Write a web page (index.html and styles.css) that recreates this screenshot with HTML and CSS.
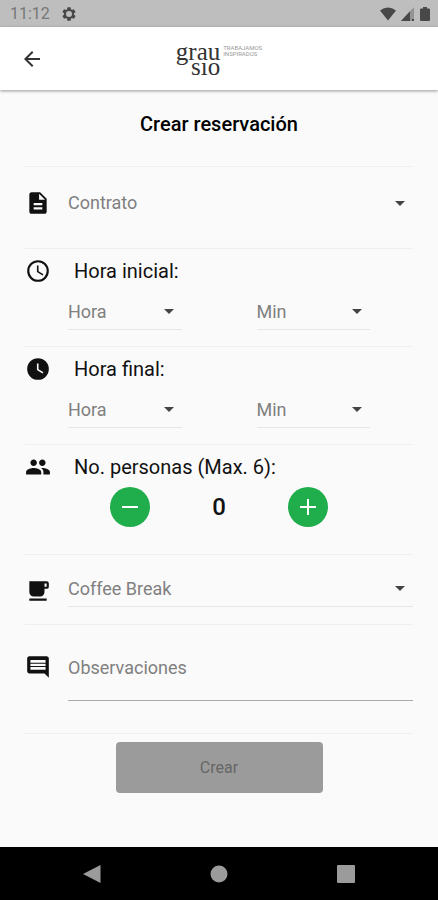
FILE: index.html
```html
<!DOCTYPE html>
<html lang="es">
<head>
<meta charset="utf-8">
<meta name="viewport" content="width=device-width, initial-scale=1">
<title>Crear reservación</title>
<link rel="stylesheet" href="styles.css">
</head>
<body>
<div class="status">
  <span class="time">11:12</span>
  <svg class="gear" viewBox="0 0 24 24" width="16" height="16"><path fill-rule="evenodd" d="M19.4 13a7.500 7.500 0 0 0 0-2l2.100-1.650a.5.5 0 0 0 .12-.64l-2-3.460a.5.5 0 0 0-.61-.22l-2.490 1a7.300 7.300 0 0 0-1.690-.98l-.38-2.650A.5.5 0 0 0 14 2h-4a.5.5 0 0 0-.49.420l-.38 2.650c-.61.250-1.170.590-1.690.980l-2.490-1a.5.5 0 0 0-.61.220l-2 3.460a.5.5 0 0 0 .12.640L4.570 11a7.900 7.900 0 0 0 0 2l-2.110 1.650a.5.5 0 0 0-.12.640l2 3.460c.12.220.39.300.61.220l2.490-1c.52.400 1.080.730 1.690.980l.38 2.650c.03.240.24.420.49.420h4c.25 0 .46-.18.490-.42l.38-2.650a7.700 7.700 0 0 0 1.690-.98l2.490 1c.23.090.49 0 .61-.22l2-3.460a.5.5 0 0 0-.12-.64zM12 16.500a4.500 4.500 0 1 1 0-9 4.500 4.500 0 0 1 0 9z"/></svg>
  <span class="signals">
    <svg viewBox="0 0 16 14" width="16" height="14"><path d="M0 3.500Q8-2.500 16 3.500L8 13.500z"/></svg>
    <svg viewBox="0 0 14 14" width="14" height="14"><path opacity=".35" d="M13 0v14H0z"/><path d="M9 4.300V14H0z"/><path d="M11 12h2v2h-2z"/></svg>
    <svg viewBox="0 0 10 14" width="10" height="14"><path d="M3 0h4v1.500h2a1 1 0 0 1 1 1V13a1 1 0 0 1-1 1H1a1 1 0 0 1-1-1V2.500a1 1 0 0 1 1-1h2z"/></svg>
  </span>
</div>
<header class="bar">
  <button class="back" type="button" aria-label="Volver"><svg viewBox="0 0 24 24" width="24" height="24"><path d="M20 11H7.830l5.590-5.590L12 4l-8 8 8 8 1.410-1.410L7.830 13H20z"/></svg></button>
  <div class="logo">
    <div class="name"><span>grau</span><span class="second">sıo</span></div>
    <div class="motto">TRABAJAMOS<br>INSPIRADOS</div>
  </div>
</header>
<main>
  <h1>Crear reservación</h1>
  <form>
    <section class="row contract">
      <svg class="icon" viewBox="0 0 24 24"><path d="M14 2H6c-1.100 0-2 .9-2 2v16c0 1.100.9 2 2 2h12c1.100 0 2-.9 2-2V8l-6-6zm2 16H8v-2h8v2zm0-4H8v-2h8v2zm-3-5V3.500L18.500 9H13z"/></svg>
      <div class="select"><select aria-label="Contrato"><option>Contrato</option></select></div>
    </section>
    <section class="row stack">
      <svg class="icon" viewBox="0 0 24 24"><path d="M12 2a10 10 0 1 0 0 20 10 10 0 0 0 0-20zm0 18a8 8 0 1 1 0-16 8 8 0 0 1 0 16zm.5-13H11v6l5.250 3.150.75-1.230-4.500-2.670z"/></svg>
      <h2>Hora inicial:</h2>
      <div class="times">
        <div class="select lined"><select aria-label="Hora inicial, hora"><option>Hora</option></select></div>
        <div class="select lined"><select aria-label="Hora inicial, minutos"><option>Min</option></select></div>
      </div>
    </section>
    <section class="row stack">
      <svg class="icon" viewBox="0 0 24 24"><path d="M12 2a10 10 0 1 0 0 20 10 10 0 0 0 0-20zm4.200 14.200L11 13V7h1.500v5.200l4.500 2.700z"/></svg>
      <h2>Hora final:</h2>
      <div class="times">
        <div class="select lined"><select aria-label="Hora final, hora"><option>Hora</option></select></div>
        <div class="select lined"><select aria-label="Hora final, minutos"><option>Min</option></select></div>
      </div>
    </section>
    <section class="row stack people">
      <svg class="icon" viewBox="0 0 24 24"><path d="M16 11c1.660 0 2.990-1.340 2.990-3S17.660 5 16 5s-3 1.340-3 3 1.340 3 3 3zm-8 0c1.660 0 2.990-1.340 2.990-3S9.660 5 8 5 5 6.340 5 8s1.340 3 3 3zm0 2c-2.330 0-7 1.170-7 3.500V19h14v-2.500c0-2.330-4.670-3.500-7-3.500zm8 0c-.29 0-.62.020-.97.050 1.160.84 1.970 1.970 1.970 3.450V19h6v-2.500c0-2.330-4.670-3.500-7-3.500z"/></svg>
      <h2>No. personas (Max. 6):</h2>
      <div class="stepper">
        <button type="button" aria-label="Menos"><svg viewBox="0 0 24 24" width="24" height="24"><path d="M4 11h16v2H4z"/></svg></button>
        <output>0</output>
        <button type="button" aria-label="Más"><svg viewBox="0 0 24 24" width="24" height="24"><path d="M4 11h7V4h2v7h7v2h-7v7h-2v-7H4z"/></svg></button>
      </div>
    </section>
    <section class="row coffee">
      <svg class="icon" viewBox="0 0 24 24"><path d="M20 3H4v10a4 4 0 0 0 4 4h6a4 4 0 0 0 4-4v-3h2a2 2 0 0 0 2-2V5a2 2 0 0 0-2-2zm0 5h-2V5h2zM4 19h16v2H4z"/></svg>
      <div class="select lined"><select aria-label="Coffee Break"><option>Coffee Break</option></select></div>
    </section>
    <section class="row notes">
      <svg class="icon" viewBox="0 0 24 24"><path d="M21.990 4c0-1.100-.89-2-1.990-2H4c-1.100 0-2 .9-2 2v12c0 1.100.9 2 2 2h14l4 4zM19 14.500H5v-2.500h14zm0-3.500H5V9h14zm0-3H5V5.500h14z"/></svg>
      <input type="text" placeholder="Observaciones" aria-label="Observaciones">
    </section>
    <div class="actions"><button class="submit" type="button" disabled>Crear</button></div>
  </form>
</main>
<nav class="keys">
  <button type="button" aria-label="Atrás"><svg viewBox="0 0 18 18" width="18" height="18"><path d="M17.500 0v18L0 9z"/></svg></button>
  <button type="button" aria-label="Inicio"><svg viewBox="0 0 18 18" width="18" height="18"><circle cx="9" cy="9" r="8.500"/></svg></button>
  <button type="button" aria-label="Recientes"><svg viewBox="0 0 18 18" width="18" height="18"><rect width="18" height="18" rx="1"/></svg></button>
</nav>
</body>
</html>
```
FILE: styles.css
```css
* { box-sizing: border-box; }

body {
  margin: 0;
  min-height: 100vh;
  display: flex;
  flex-direction: column;
  background: #fafafa;
  color: #111;
  font-family: Roboto, sans-serif;
}

button, select, input { font: inherit; margin: 0; }
button { padding: 0; border: 0; background: none; }
svg { display: block; flex: none; }

.status {
  display: flex;
  align-items: center;
  height: 27px;
  padding: 0 8px 0 10px;
  background: #bebebe;
  color: #777;
  font-size: 16px;
}
.status svg { fill: #484848; }
.gear { margin-left: 11px; }
.signals { display: flex; gap: 5px; margin-left: auto; }

.bar {
  display: grid;
  grid-template-columns: 1fr auto 1fr;
  align-items: center;
  height: 63px;
  padding: 0 20px;
  background: #fff;
  box-shadow: 0 1px 3px rgba(0, 0, 0, .4);
}
.back { justify-self: start; }
.back svg { fill: #333; }
.logo { display: flex; gap: 3px; }
.name {
  display: flex;
  flex-direction: column;
  font-family: "Liberation Serif", serif;
  font-size: 25px;
  line-height: 15px;
  color: #333;
}
.second { align-self: flex-end; }
.motto {
  padding-top: 1px;
  font-size: 6px;
  line-height: 6px;
  color: #999;
}

main { flex: 1; padding: 0 25px; }

h1 {
  margin: 0;
  padding: 22px 0 30px;
  font-size: 20px;
  line-height: 24px;
  font-weight: 500;
  text-align: center;
  color: #000;
}

.row {
  display: grid;
  grid-template-columns: 26px 1fr;
  column-gap: 17px;
  border-top: 1px solid #efefef;
}
.icon { width: 26px; height: 26px; fill: #111; }

h2 {
  margin: 0;
  padding-left: 6px;
  font-size: 20px;
  line-height: 26px;
  font-weight: 400;
}

.select { position: relative; }
.select::after {
  content: "";
  position: absolute;
  right: 8px;
  top: 12px;
  border: 5px solid transparent;
  border-top-color: #444;
  border-bottom: 0;
  pointer-events: none;
}
select {
  display: block;
  width: 100%;
  height: 28px;
  padding: 0;
  border: 0;
  background: none;
  color: #808080;
  font-size: 18px;
  appearance: none;
}
.lined { padding-bottom: 4px; border-bottom: 1px solid #e6e6e6; }

.contract { height: 82px; align-items: center; padding-bottom: 10px; }

.stack { padding: 9px 0 16px; }
.times {
  grid-column: 2;
  display: grid;
  grid-template-columns: 1fr 1fr;
  column-gap: 75px;
  padding: 13px 43px 0 0;
}

.people { padding-bottom: 27px; }
.stepper {
  grid-column: 1 / -1;
  display: flex;
  align-items: center;
  justify-content: space-between;
  padding: 7px 85px 0;
}
.stepper button {
  display: grid;
  place-items: center;
  width: 40px;
  height: 40px;
  border-radius: 50%;
  background: #20ad4b;
}
.stepper svg { fill: #fff; }
output { font-size: 24px; font-weight: 500; }

.coffee { padding: 19px 0 17px; align-items: center; }

.notes { padding: 29px 0 32px; border-bottom: 1px solid #efefef; }
.notes input {
  width: 100%;
  height: 47px;
  padding: 0 0 20px;
  border: 0;
  border-bottom: 1px solid #aaa;
  border-radius: 0;
  background: none;
  font-size: 18px;
}
.notes input::placeholder { color: #808080; opacity: 1; }

.actions { display: flex; justify-content: center; padding: 8px 0; }
.submit {
  width: 100%;
  max-width: 207px;
  height: 51px;
  border-radius: 4px;
  background: #9b9b9b;
  color: #666;
  font-size: 16px;
}

.keys {
  display: flex;
  align-items: center;
  justify-content: space-between;
  height: 53px;
  padding: 0 83px;
  background: #000;
}
.keys svg { fill: #9b9b9b; }
```
